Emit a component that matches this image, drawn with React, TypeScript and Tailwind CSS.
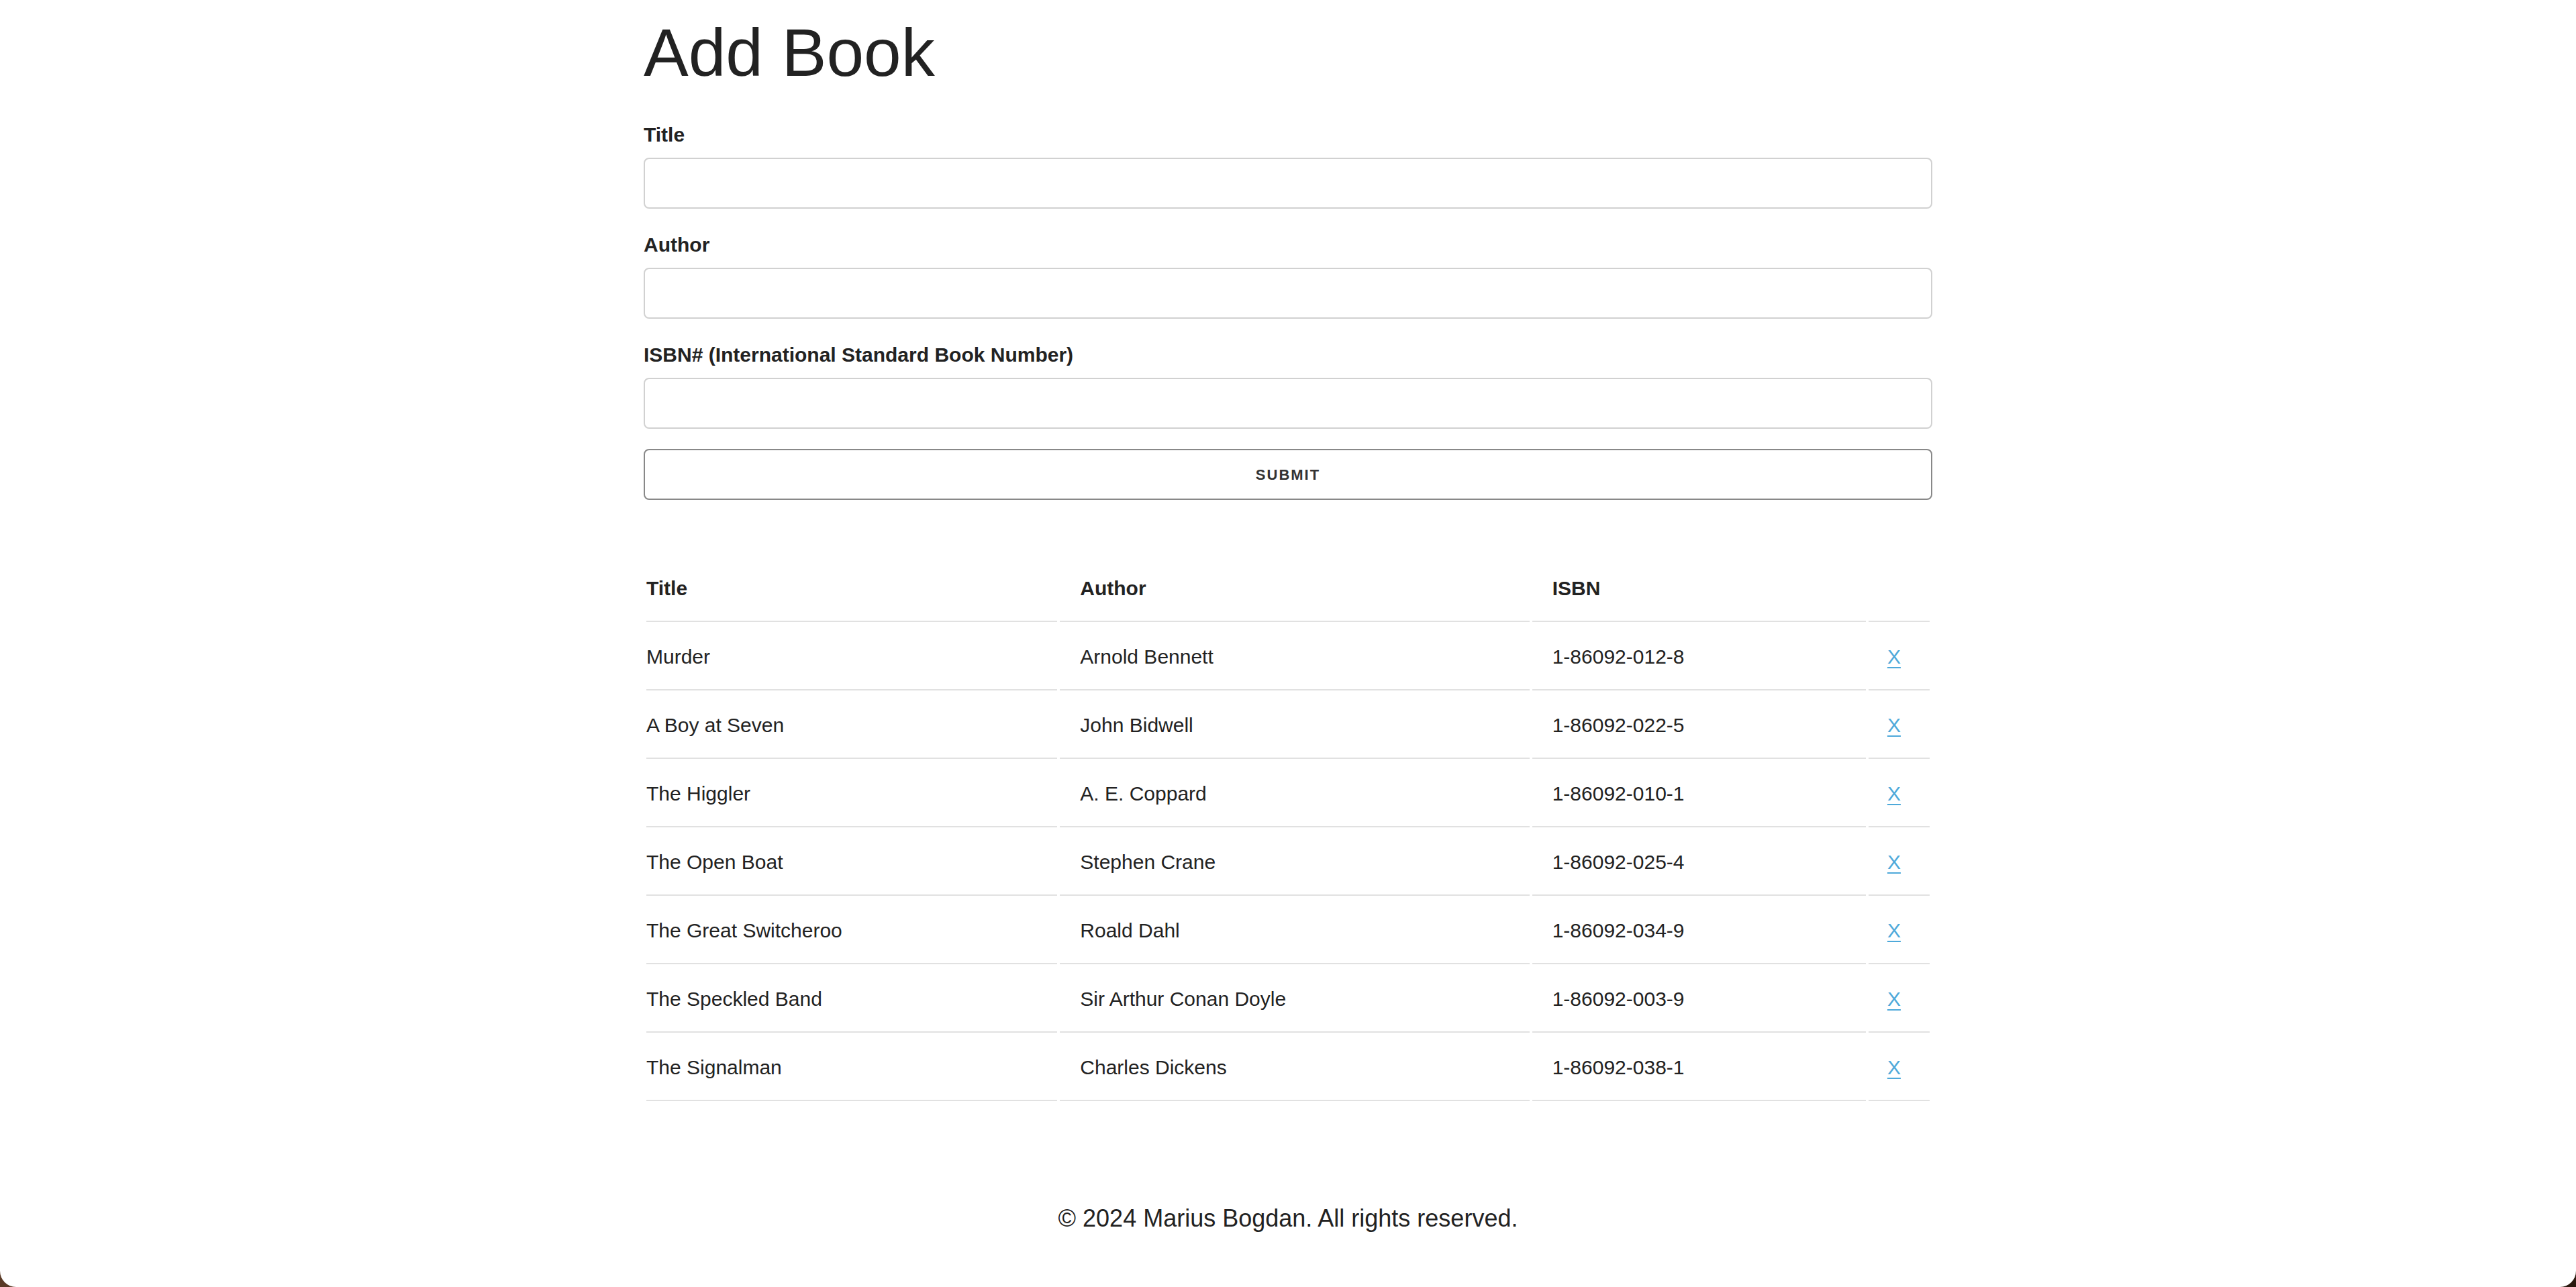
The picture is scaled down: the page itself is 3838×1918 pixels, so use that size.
import React from "react";

const books = [
  { title: "Murder", author: "Arnold Bennett", isbn: "1-86092-012-8" },
  { title: "A Boy at Seven", author: "John Bidwell", isbn: "1-86092-022-5" },
  { title: "The Higgler", author: "A. E. Coppard", isbn: "1-86092-010-1" },
  { title: "The Open Boat", author: "Stephen Crane", isbn: "1-86092-025-4" },
  { title: "The Great Switcheroo", author: "Roald Dahl", isbn: "1-86092-034-9" },
  { title: "The Speckled Band", author: "Sir Arthur Conan Doyle", isbn: "1-86092-003-9" },
  { title: "The Signalman", author: "Charles Dickens", isbn: "1-86092-038-1" },
];

function Field({ label }: { label: string }) {
  return (
    <div>
      <label className="block text-[30px] font-bold leading-[48px] mb-[10px] text-[#222]">{label}</label>
      <input
        type="text"
        className="block w-full h-[76px] border-2 border-[#d1d1d1] rounded-[8px] bg-white mb-[30px] px-[20px] text-[30px] outline-none"
      />
    </div>
  );
}

export default function App() {
  return (
    <div className="h-[1918px] bg-gradient-to-r from-[#5a3a26] to-[#2a180e]" style={{ fontFamily: '"Liberation Sans", Arial, Helvetica, sans-serif' }}>
      <div className="h-[1918px] bg-white rounded-b-[24px] overflow-hidden text-[#222]">
        <main className="w-[1920px] mx-auto">
          <h1 className="text-[100px] leading-[120px] mt-0 pt-[18px] mb-[39px] font-normal text-[#222]">Add Book</h1>
          <form onSubmit={(e) => e.preventDefault()}>
            <Field label="Title" />
            <Field label="Author" />
            <Field label="ISBN# (International Standard Book Number)" />
            <button
              type="submit"
              className="block w-full h-[76px] border-2 border-[#888] rounded-[8px] bg-white uppercase text-[22px] font-bold tracking-[2px] text-[#333]"
            >
              Submit
            </button>
          </form>
          <table className="w-full mt-[80px] table-fixed border-separate border-spacing-[4px] text-left">
            <thead>
              <tr>
                <th className="w-[612px] pl-0 pr-[30px] py-[24px] text-[30px] leading-[48px] font-bold border-b-2 border-[#e1e1e1]">Title</th>
                <th className="w-[699px] px-[30px] py-[24px] text-[30px] leading-[48px] font-bold border-b-2 border-[#e1e1e1]">Author</th>
                <th className="w-[497px] px-[30px] py-[24px] text-[30px] leading-[48px] font-bold border-b-2 border-[#e1e1e1]">ISBN</th>
                <th className="w-[91px] pl-[30px] pr-0 py-[24px] text-[30px] leading-[48px] font-bold border-b-2 border-[#e1e1e1]"></th>
              </tr>
            </thead>
            <tbody>
              {books.map((b) => (
                <tr key={b.isbn}>
                  <td className="pl-0 pr-[30px] py-[24px] text-[30px] leading-[48px] border-b-2 border-[#e1e1e1]">{b.title}</td>
                  <td className="px-[30px] py-[24px] text-[30px] leading-[48px] border-b-2 border-[#e1e1e1]">{b.author}</td>
                  <td className="px-[30px] py-[24px] text-[30px] leading-[48px] border-b-2 border-[#e1e1e1]">{b.isbn}</td>
                  <td className="pl-[28px] pr-0 py-[24px] text-[30px] leading-[48px] border-b-2 border-[#e1e1e1]">
                    <a href="#" className="text-[#4ea9da] underline decoration-2 underline-offset-[5px]">X</a>
                  </td>
                </tr>
              ))}
            </tbody>
          </table>
        </main>
        <footer className="mt-[142px] text-center text-[36px] leading-[58px] text-[#222]">
          © 2024 Marius Bogdan. All rights reserved.
        </footer>
      </div>
    </div>
  );
}
